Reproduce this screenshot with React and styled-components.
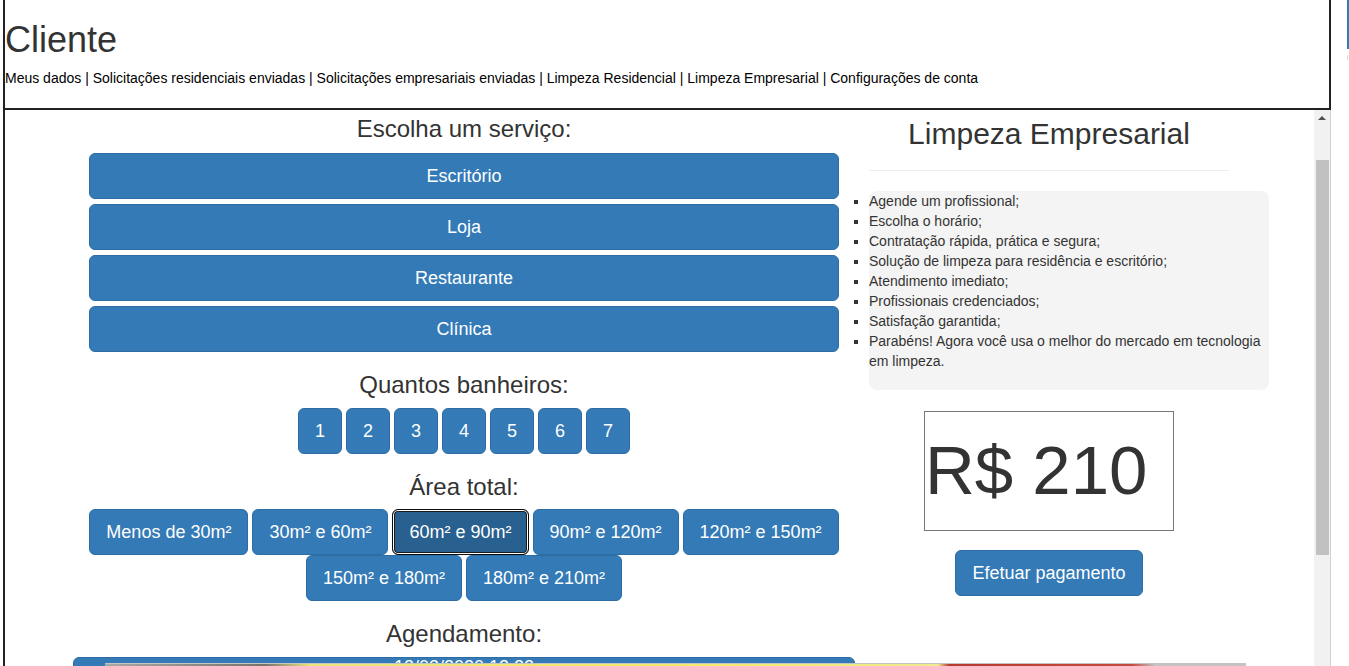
import React from "react";
import styled, { createGlobalStyle, css } from "styled-components";

const Global = createGlobalStyle`
  html, body { margin: 0; padding: 0; background: #fff; }
  body { font-family: "Liberation Sans", Arial, sans-serif; font-size: 14px; line-height: 1.42857; color: #333; overflow: hidden; }
  * { box-sizing: border-box; }
`;

const Page = styled.div`
  position: relative;
  display: flex;
  height: 100vh;
  overflow: hidden;
`;

const Main = styled.div`
  margin-left: 3px;
  width: 1328px;
  border-left: 2px solid #222;
  display: flex;
  flex-direction: column;
  min-height: 0;
`;

const Header = styled.header`
  height: 110px;
  flex: none;
  border-right: 2px solid #222;
  border-bottom: 2px solid #222;
  padding: 20px 0 0 0;
`;

const Title = styled.h1`
  margin: 0 0 8px;
  font-size: 36px;
  line-height: 1.1;
  font-weight: 500;
  color: #333;
`;

const Nav = styled.nav`
  font-size: 14px;
  line-height: 20px;
  color: #000;
  white-space: nowrap;
`;

const NavLink = styled.a`
  color: #000;
  text-decoration: none;
`;

const Frame = styled.div`
  flex: 1;
  min-height: 0;
  display: flex;
  border-right: 1px solid #d0d0d0;
`;

const Content = styled.div`
  flex: 1;
  overflow: hidden;
  display: flex;
  align-items: flex-start;
  gap: 14px;
  padding-left: 68px;
`;

const LeftCol = styled.div`
  width: 782px;
  flex: none;
`;

const RightCol = styled.div`
  width: 360px;
  flex: none;
`;

const Heading = styled.h3`
  margin: ${(p) => (p.$first ? "6px 0 11px" : "20px 0 9px")};
  font-size: 24px;
  line-height: 1.1;
  font-weight: 500;
  text-align: center;
  color: #333;
`;

const Inner = styled.div`
  padding: 0 16px;
`;

const Btn = styled.button`
  font-family: "Liberation Sans", Arial, sans-serif;
  font-size: 18px;
  line-height: 24px;
  padding: 10px 16px;
  border-radius: 6px;
  color: #fff;
  cursor: pointer;
  white-space: nowrap;
  background: #337ab7;
  border: 1px solid #2e6da4;
  ${(p) =>
    p.$active &&
    css`
      background: #286090;
      border-color: #0d0d0d;
      box-shadow: inset 0 0 0 1px #fff, inset 0 0 0 2px #1a1a1a;
    `}
`;

const BlockBtn = styled(Btn)`
  display: block;
  width: 100%;
  & + & { margin-top: 5px; }
`;

const NumRow = styled.div`
  display: flex;
  justify-content: center;
  gap: 4px;
`;

const NumBtn = styled(Btn)`
  width: 44px;
  padding: 10px 0;
`;

const AreaRow = styled.div`
  display: flex;
  justify-content: center;
  gap: 4px;
`;

const DateBar = styled.div`
  height: 46px;
  border-radius: 6px;
  background: #337ab7;
  border: 1px solid #2e6da4;
  color: #fff;
  font-size: 18px;
  line-height: 18px;
  text-align: center;
`;

const SideTitle = styled.h2`
  margin: 7px 0 0;
  font-size: 30px;
  line-height: 1.1;
  font-weight: 500;
  text-align: center;
  color: #333;
`;

const Rule = styled.hr`
  margin: 20px 0;
  border: 0;
  border-top: 1px solid #eee;
`;

const Features = styled.ul`
  width: 400px;
  margin: 0;
  padding: 0 0 19px;
  list-style: square outside;
  background: #f4f4f4;
  border-radius: 8px;
  font-size: 14px;
  line-height: 20px;
  color: #333;
`;

const Price = styled.div`
  width: 250px;
  height: 120px;
  margin: 21px auto 0;
  border: 1px solid #777;
  font-size: 69px;
  line-height: 118px;
  color: #333;
  white-space: nowrap;
  overflow: hidden;
`;

const PayWrap = styled.div`
  display: flex;
  justify-content: center;
  margin-top: 19px;
`;

const Scrollbar = styled.div`
  width: 16px;
  flex: none;
  background: #f1f1f1;
  display: flex;
  flex-direction: column;
  align-items: center;
`;

const ArrowUp = styled.div`
  margin-top: 6px;
  width: 0;
  height: 0;
  border-left: 4px solid transparent;
  border-right: 4px solid transparent;
  border-bottom: 4px solid #505050;
`;

const Thumb = styled.div`
  margin-top: 40px;
  width: 13px;
  margin-left: 1px;
  height: 395px;
  background: #c1c1c1;
`;

const Gutter = styled.div`
  flex: 1;
  display: flex;
  flex-direction: column;
  align-items: flex-end;
`;

const Sliver = styled.div`
  width: 2px;
  height: 49px;
  background: #337ab7;
`;

const Tick = styled.div`
  width: 1px;
  height: 5px;
  margin-top: 6px;
  margin-right: 1px;
  background: #ddd;
`;

const Strip = styled.div`
  position: absolute;
  left: 105px;
  bottom: 0;
  width: 1141px;
  height: 3px;
  border-top: 1px solid #c4c4c4;
  background: linear-gradient(
    90deg,
    #a8a8a8 0%,
    #76736a 14%,
    #ece37e 18%,
    #f3ea6c 50%,
    #f0e98e 73%,
    #b73a30 74%,
    #c74a3e 90%,
    #c4c4c4 92%,
    #c4c4c4 100%
  );
`;

const navItems = [
  "Meus dados",
  "Solicitações residenciais enviadas",
  "Solicitações empresariais enviadas",
  "Limpeza Residencial",
  "Limpeza Empresarial",
  "Configurações de conta",
];

const services = ["Escritório", "Loja", "Restaurante", "Clínica"];
const areas1 = ["Menos de 30m²", "30m² e 60m²", "60m² e 90m²", "90m² e 120m²", "120m² e 150m²"];
const areas2 = ["150m² e 180m²", "180m² e 210m²"];
const features = [
  "Agende um profissional;",
  "Escolha o horário;",
  "Contratação rápida, prática e segura;",
  "Solução de limpeza para residência e escritório;",
  "Atendimento imediato;",
  "Profissionais credenciados;",
  "Satisfação garantida;",
  "Parabéns! Agora você usa o melhor do mercado em tecnologia em limpeza.",
];

export default function App() {
  return (
    <>
      <Global />
      <Page>
        <Main>
          <Header>
            <Title>Cliente</Title>
            <Nav>
              {navItems.map((n, i) => (
                <React.Fragment key={n}>
                  {i > 0 && " | "}
                  <NavLink href="#">{n}</NavLink>
                </React.Fragment>
              ))}
            </Nav>
          </Header>
          <Frame>
            <Content>
              <LeftCol>
                <Heading $first>Escolha um serviço:</Heading>
                <Inner>
                  {services.map((s) => (
                    <BlockBtn key={s}>{s}</BlockBtn>
                  ))}
                </Inner>
                <Heading>Quantos banheiros:</Heading>
                <NumRow>
                  {[1, 2, 3, 4, 5, 6, 7].map((n) => (
                    <NumBtn key={n}>{n}</NumBtn>
                  ))}
                </NumRow>
                <Heading>Área total:</Heading>
                <AreaRow>
                  {areas1.map((a) => (
                    <Btn key={a} $active={a === "60m² e 90m²"}>
                      {a}
                    </Btn>
                  ))}
                </AreaRow>
                <AreaRow>
                  {areas2.map((a) => (
                    <Btn key={a}>{a}</Btn>
                  ))}
                </AreaRow>
                <Heading>Agendamento:</Heading>
                <DateBar>13/03/2020 13:22</DateBar>
              </LeftCol>
              <RightCol>
                <SideTitle>Limpeza Empresarial</SideTitle>
                <Rule />
                <Features>
                  {features.map((f) => (
                    <li key={f}>{f}</li>
                  ))}
                </Features>
                <Price>R$ 210</Price>
                <PayWrap>
                  <Btn>Efetuar pagamento</Btn>
                </PayWrap>
              </RightCol>
            </Content>
            <Scrollbar>
              <ArrowUp />
              <Thumb />
            </Scrollbar>
          </Frame>
        </Main>
        <Gutter>
          <Sliver />
          <Tick />
        </Gutter>
        <Strip />
      </Page>
    </>
  );
}
